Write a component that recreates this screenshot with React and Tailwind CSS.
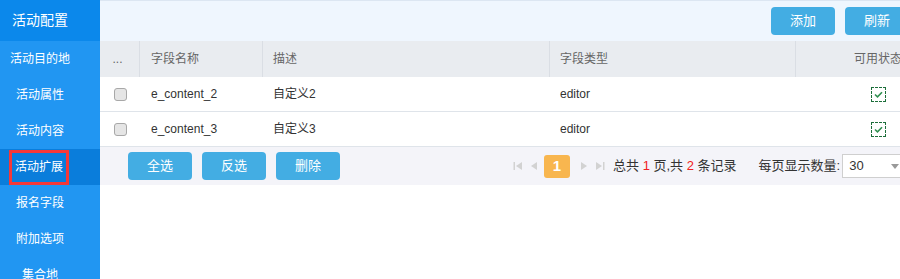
import React from "react";

const font = { fontFamily: '"Liberation Sans", "Noto Sans CJK SC", sans-serif' };

function Btn({ children }) {
  return (
    <button className="w-16 h-7 rounded-[4px] bg-[#43ade3] text-white text-[13px] flex items-center justify-center shrink-0">
      {children}
    </button>
  );
}

function CheckBox() {
  return <span className="block w-[13px] h-[13px] rounded-[3px] border border-[#a8a8a8] bg-[#e5e5e5]" />;
}

function Status() {
  return (
    <span className="w-[15px] h-[15px] border border-dashed border-[#1c6e3a] flex items-center justify-center">
      <svg width="9" height="7" viewBox="0 0 9 7">
        <path d="M1 3.5 L3.5 5.8 L8 1.2" fill="none" stroke="#2f9050" strokeWidth="1.6" />
      </svg>
    </span>
  );
}

const side = ["活动目的地", "活动属性", "活动内容", "活动扩展", "报名字段", "附加选项", "集合地"];

const rows = [
  ["e_content_2", "自定义2", "editor"],
  ["e_content_3", "自定义3", "editor"],
];

export default function App() {
  return (
    <div className="w-[900px] h-[279px] overflow-hidden flex bg-white" style={font}>
      <div className="w-[100px] shrink-0 bg-[#2196f2] flex flex-col overflow-hidden">
        <div className="h-[41px] shrink-0 bg-[#0b88eb] text-white text-[14px] flex items-center pl-[12px]">活动配置</div>
        {side.map((s, i) => (
          <div
            key={s}
            className={
              "h-9 shrink-0 flex items-center text-white text-[12px] " +
              (i === 3 ? "bg-[#0a7ddb] w-[100px] justify-start pl-[9px]" : "w-[80px] justify-center")
            }
          >
            {i === 3 ? (
              <span className="border-[3px] border-[#f53838] h-[35px] w-[60px] flex items-center justify-center">{s}</span>
            ) : (
              s
            )}
          </div>
        ))}
      </div>
      <div className="w-[860px] shrink-0 flex flex-col">
        <div className="h-[41px] shrink-0 bg-[#eff6fe] border-t border-[#dce6f2] flex items-center gap-[10px] pl-[671px]">
          <Btn>添加</Btn>
          <Btn>刷新</Btn>
        </div>
        <div className="h-9 shrink-0 bg-[#e9ecf0] flex text-[12px] text-[#666]">
          <div className="w-10 flex items-center justify-center pr-1 border-r border-[#dadee4]">...</div>
          <div className="w-[123px] flex items-center pl-[11px] border-r border-[#dadee4]">字段名称</div>
          <div className="w-[287px] flex items-center pl-[10px] border-r border-[#dadee4]">描述</div>
          <div className="w-[246px] flex items-center pl-[10px] border-r border-[#dadee4]">字段类型</div>
          <div className="flex-1 flex items-center justify-center">可用状态</div>
        </div>
        {rows.map((r) => (
          <div key={r[0]} className="h-[35px] shrink-0 flex border-b border-[#dfe4ea] text-[12px] text-[#333]">
            <div className="w-10 flex items-center justify-center">
              <CheckBox />
            </div>
            <div className="w-[123px] flex items-center pl-[11px]">{r[0]}</div>
            <div className="w-[287px] flex items-center pl-[10px]">{r[1]}</div>
            <div className="w-[246px] flex items-center pl-[10px]">{r[2]}</div>
            <div className="flex-1 flex items-center justify-center">
              <Status />
            </div>
          </div>
        ))}
        <div className="h-[38px] shrink-0 bg-[#f4f4f9] flex items-center pl-[28px] text-[12px] text-[#333]">
          <div className="flex gap-[10px]">
            <Btn>全选</Btn>
            <Btn>反选</Btn>
            <Btn>删除</Btn>
          </div>
          <div className="ml-[173px] flex items-center">
            <svg width="10" height="10" viewBox="0 0 10 10" className="mr-[7px]">
              <rect x="0.5" y="1" width="1.5" height="8" fill="#d2d2d2" />
              <path d="M9 1 L3 5 L9 9 Z" fill="#d2d2d2" />
            </svg>
            <svg width="8" height="10" viewBox="0 0 8 10" className="mr-[6px]">
              <path d="M7 1 L1 5 L7 9 Z" fill="#d2d2d2" />
            </svg>
            <span className="w-[26px] h-[23px] rounded-[3px] bg-[#f8b64f] text-white text-[15px] font-bold flex items-center justify-center">1</span>
            <svg width="8" height="10" viewBox="0 0 8 10" className="ml-[10px]">
              <path d="M1 1 L7 5 L1 9 Z" fill="#d2d2d2" />
            </svg>
            <svg width="10" height="10" viewBox="0 0 10 10" className="ml-[7px]">
              <path d="M1 1 L7 5 L1 9 Z" fill="#d2d2d2" />
              <rect x="8" y="1" width="1.5" height="8" fill="#d2d2d2" />
            </svg>
          </div>
          <div className="ml-[8px] text-[13px] text-[#333]">
            总共 <span className="text-[#f02020]">1</span> 页,共 <span className="text-[#f02020]">2</span> 条记录
          </div>
          <div className="ml-[22px] text-[13px]">每页显示数量:</div>
          <div className="ml-[2px] w-[64px] h-[24px] bg-white border border-[#cfcfcf] flex items-center pl-[6px] relative text-[13px]">
            30
            <svg width="8" height="5" viewBox="0 0 8 5" className="absolute left-[48px] top-[9px]">
              <path d="M0 0 L8 0 L4 5 Z" fill="#999" />
            </svg>
          </div>
        </div>
      </div>
    </div>
  );
}
